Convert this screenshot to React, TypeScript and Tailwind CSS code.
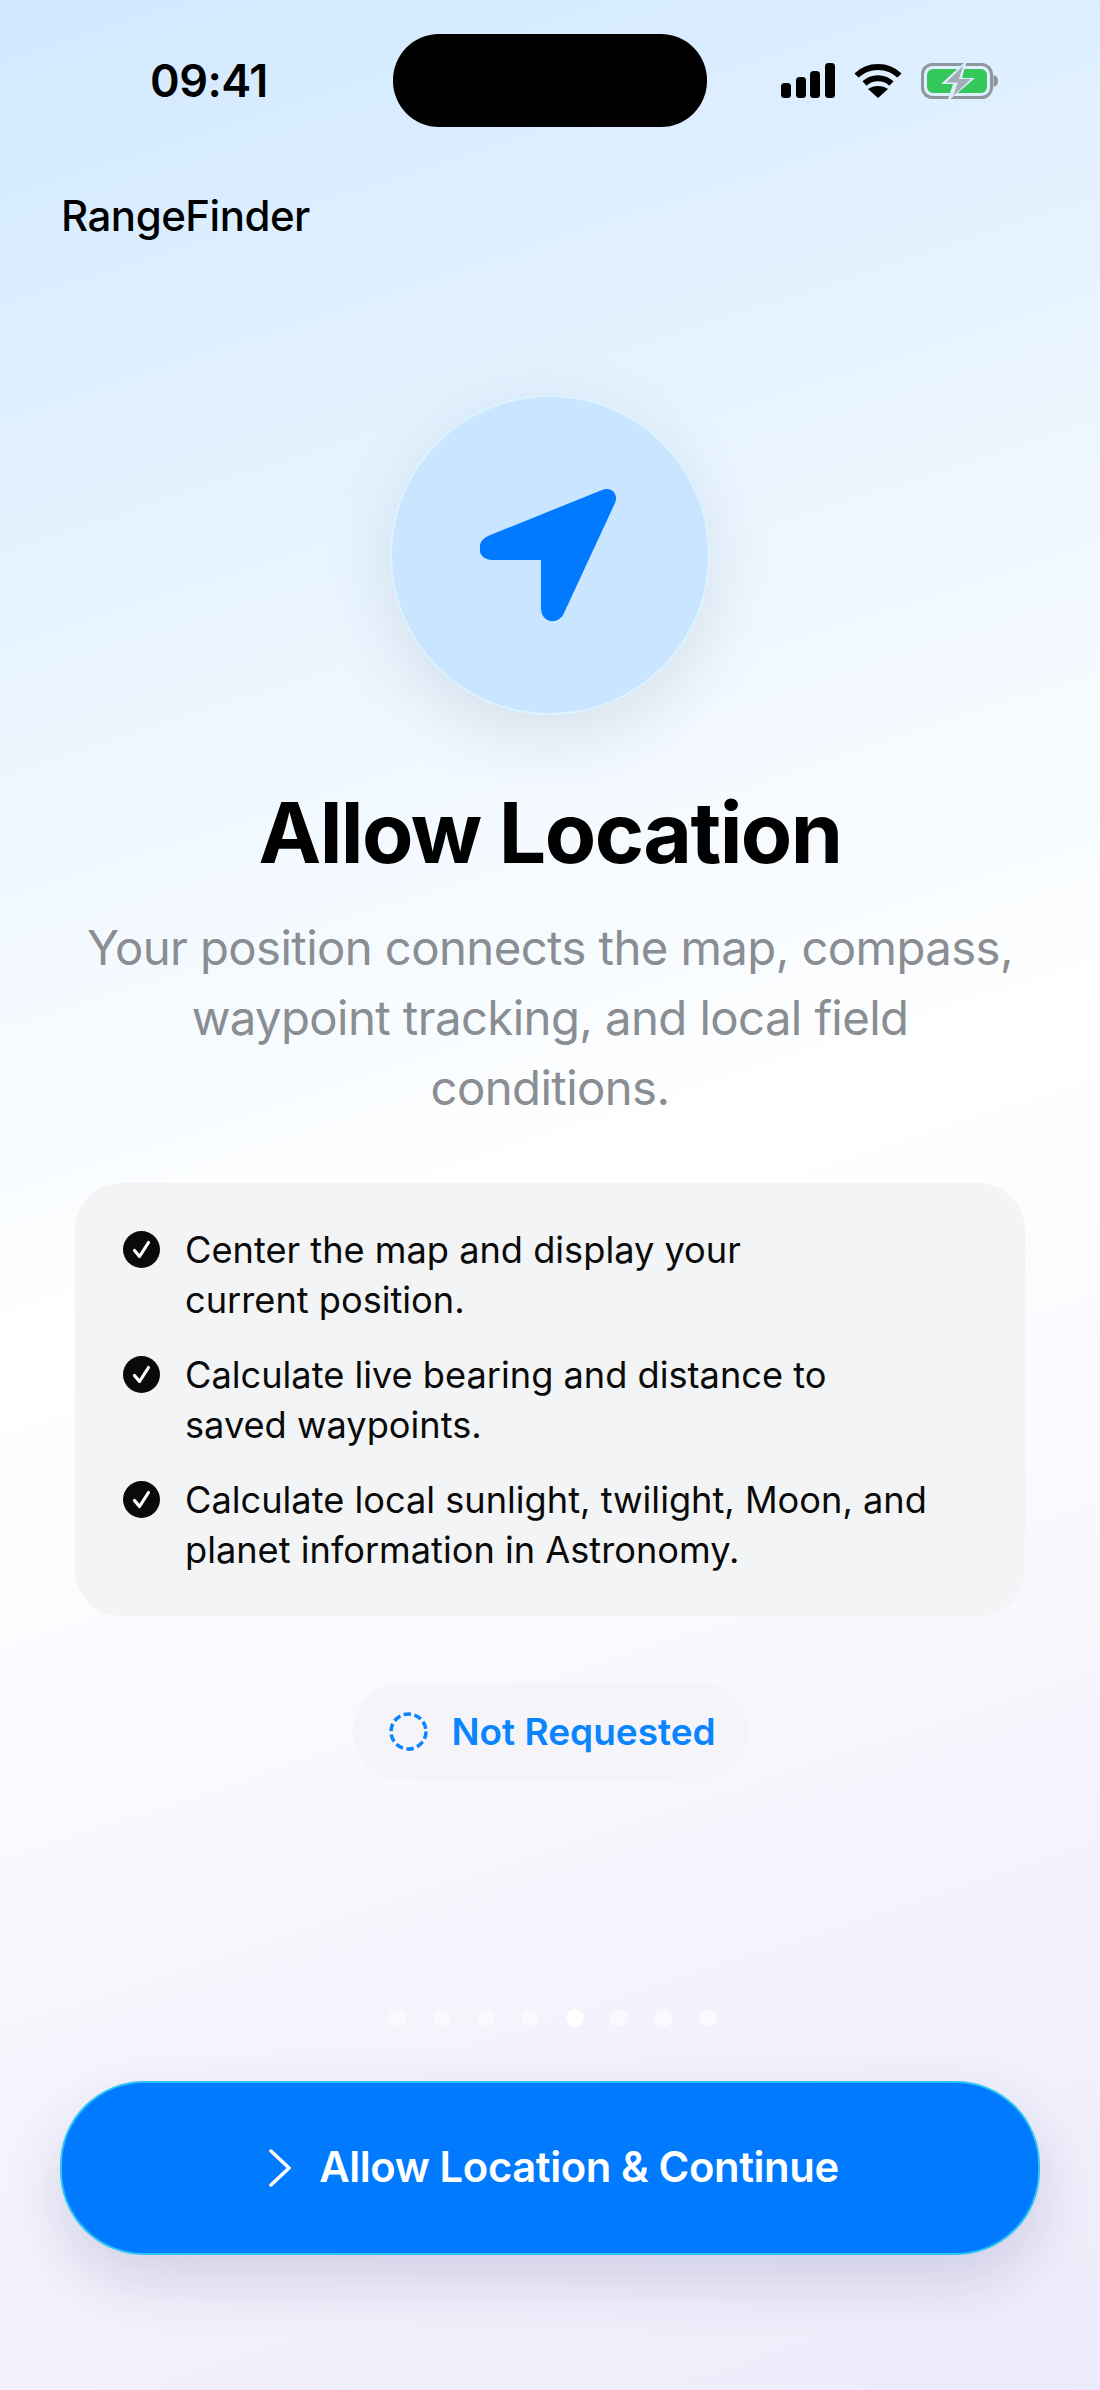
const items = [
  ["Center the map and display your", "current position."],
  ["Calculate live bearing and distance to", "saved waypoints."],
  ["Calculate local sunlight, twilight, Moon, and", "planet information in Astronomy."],
];

function Signal() {
  return (
    <svg width="54" height="35" viewBox="0 0 54 35" fill="#000">
      <rect x="0" y="20" width="10" height="15" rx="3.5" />
      <rect x="15" y="14" width="10" height="21" rx="3.5" />
      <rect x="29" y="8" width="10" height="27" rx="3.5" />
      <rect x="44" y="0" width="10" height="35" rx="3.5" />
    </svg>
  );
}

function Wifi() {
  return (
    <svg width="48" height="35" viewBox="0 0 48 35" fill="none" stroke="#000" strokeWidth="6">
      <path d="M2.5 12.5 C14 1 34 1 45.5 12.5" />
      <path d="M10.5 20.5 C18 13.5 30 13.5 37.5 20.5" />
      <path d="M14 26 C20 22 28 22 34 26 L24 35 Z" fill="#000" stroke="none" />
    </svg>
  );
}

function Battery() {
  return (
    <svg width="77" height="36" viewBox="0 0 77 36" fill="none">
      <rect x="1.5" y="1.5" width="69" height="33" rx="10" stroke="#8f969c" strokeWidth="3" />
      <rect x="6" y="6" width="60" height="24" rx="6" fill="#34c759" />
      <path d="M72.5 12 C76 13 77 15 77 18 C77 21 76 23 72.5 24 Z" fill="#8f969c" />
      <path d="M46 -3 L20 21 H32 L26 39 L54 15 H41 L46 -3 Z" fill="#dcedff" />
      <path d="M42 3 L25 19.5 H37 L32 33 L50 16 H38 Z" fill="#a3abb3" />
    </svg>
  );
}

function CheckDot() {
  return (
    <svg width="37" height="37" viewBox="0 0 37 37" className="shrink-0 mt-[6px]">
      <circle cx="18.5" cy="18.5" r="18.5" fill="#0a0a0a" />
      <path d="M11.5 19.5 L16.5 25.5 L25.5 11.5" fill="none" stroke="#fff" strokeWidth="3.2" strokeLinecap="round" strokeLinejoin="round" />
    </svg>
  );
}

export default function App() {
  return (
    <div
      className="w-[1100px] h-[2390px] flex flex-col overflow-hidden text-black bg-[linear-gradient(162deg,#d0e8ff_0%,#e0f0ff_16%,#f0f8ff_32%,#ffffff_50%,#f9f8fe_68%,#ecebfa_100%)]"
      style={{ fontFamily: "Inter, 'Noto Sans', sans-serif" }}
    >
      {/* Status bar */}
      <div className="flex items-center h-[93px] mt-[34px] pl-[150px] pr-[102px]">
        <span className="w-[243px] text-[45px] font-semibold leading-none tracking-[-0.5px]">09:41</span>
        <div className="w-[314px] h-[93px] rounded-[46px] bg-black" />
        <div className="ml-auto flex items-center gap-[19px]">
          <Signal />
          <Wifi />
          <Battery />
        </div>
      </div>

      {/* Header */}
      <div className="mt-[64px] pl-[61px] text-[42px] leading-[50px] font-[550] tracking-[-0.5px]">RangeFinder</div>

      {/* Location badge */}
      <div className="mt-[154px] self-center w-[320px] h-[320px] rounded-full bg-[#c9e5ff] border-2 border-[#dcf4ff] shadow-[0_20px_70px_rgba(40,60,90,0.13)] flex items-center justify-center">
        <svg width="136" height="136" viewBox="0 0 136 136" fill="#007aff" className="-ml-[5px] mt-[2px]">
          <path d="M8 48 L122 2 C131 -2 139 6 135 15 L84 125 C78 138 61 135 61 120 V72 H12 C-3 72 -5 54 8 48 Z" />
        </svg>
      </div>

      <h1 className="mt-[68px] text-center text-[84px] leading-[100px] font-bold tracking-[-1.6px]">Allow Location</h1>

      <p className="mt-[30px] text-center text-[47.3px] leading-[70px] text-[#8a8d92] tracking-[-0.6px]">
        Your position connects the map, compass,
        <br />
        waypoint tracking, and local field
        <br />
        conditions.
      </p>

      {/* Permission reasons */}
      <div className="mt-[60px] mx-[75px] h-[433px] rounded-[46px] bg-[#f3f4f5] pl-[48px] pt-[42px] flex flex-col gap-[25px]">
        {items.map((lines) => (
          <div key={lines[0]} className="flex gap-[25px]">
            <CheckDot />
            <div className="text-[36.2px] leading-[50px] text-[#0a0a0a]">
              {lines[0]}
              <br />
              {lines[1]}
            </div>
          </div>
        ))}
      </div>

      {/* Status pill */}
      <div className="mt-[67px] self-center w-[395px] h-[97px] rounded-full bg-[#f4f4f9] flex items-center pl-[36px] gap-[24px]">
        <svg width="39" height="39" viewBox="0 0 39 39" fill="none">
          <circle cx="19.5" cy="19.5" r="17.5" stroke="#0a84ff" strokeWidth="3.5" strokeDasharray="7.5 3.5" />
        </svg>
        <span className="text-[37px] leading-none font-semibold text-[#0a84ff]">Not Requested</span>
      </div>

      {/* Page dots */}
      <div className="mt-[229px] self-center flex gap-[26.3px] ml-[5px]">
        {[0, 1, 2, 3, 4, 5, 6, 7].map((i) => (
          <div key={i} className={i === 4 ? "w-[18px] h-[18px] rounded-full bg-white" : "w-[18px] h-[18px] rounded-full bg-white/50"} />
        ))}
      </div>

      {/* Primary action */}
      <div className="mt-[54px] mx-[60px] h-[174px] rounded-[84px] bg-[#007aff] border-2 border-[#2cc4f5] shadow-[0_24px_60px_rgba(40,40,110,0.16)] flex items-center justify-center gap-[28px] pl-[8px] text-white">
        <svg width="22" height="38" viewBox="0 0 22 38" fill="none" stroke="#fff" strokeWidth="3.5" strokeLinecap="round" strokeLinejoin="round">
          <path d="M2 2 L20 19 L2 36" />
        </svg>
        <span className="text-[41.8px] leading-none font-semibold tracking-[-0.4px]">Allow Location &amp; Continue</span>
      </div>
    </div>
  );
}
